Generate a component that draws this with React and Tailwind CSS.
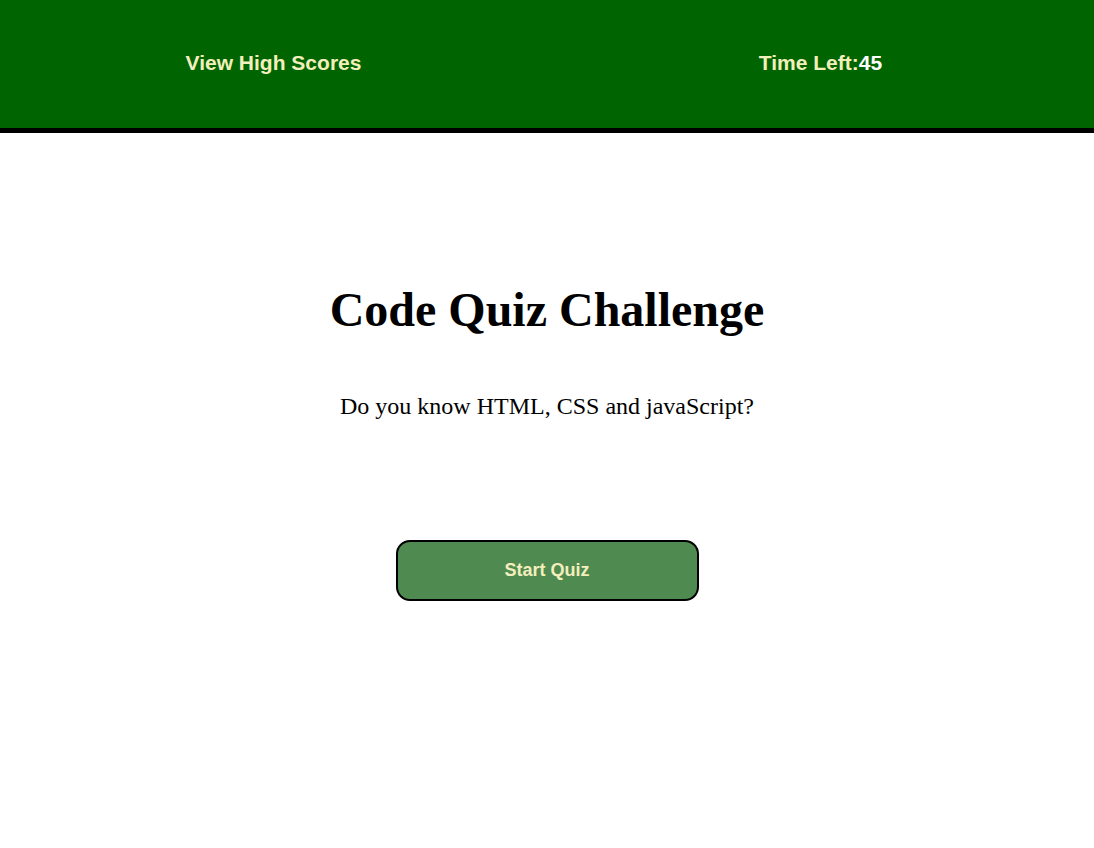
export default function App() {
  return (
    <div className="min-h-[848px] bg-white">
      <header className="h-[133px] bg-[#006400] border-b-[5px] border-black grid grid-cols-2 items-center font-['Liberation_Sans',Arial,sans-serif] font-bold text-[21px] text-[#f3efbd]">
        <span className="text-center -mt-[2px]">View High Scores</span>
        <span className="text-center -mt-[2px]">Time Left:<span className="text-white">45</span></span>
      </header>
      <main className="flex flex-col items-center font-['Liberation_Serif','Times_New_Roman',serif] text-black">
        <h1 className="mt-[149px] text-[48px] font-bold leading-[56px]">Code Quiz Challenge</h1>
        <p className="mt-[54px] text-[24px] leading-[28px]">Do you know HTML, CSS and javaScript?</p>
        <button className="mt-[120px] w-[303px] h-[61px] rounded-[14px] border-2 border-black bg-[#4f8a50] font-['Liberation_Sans',Arial,sans-serif] font-bold text-[18px] text-[#f3efbd]">
          Start Quiz
        </button>
      </main>
    </div>
  );
}
